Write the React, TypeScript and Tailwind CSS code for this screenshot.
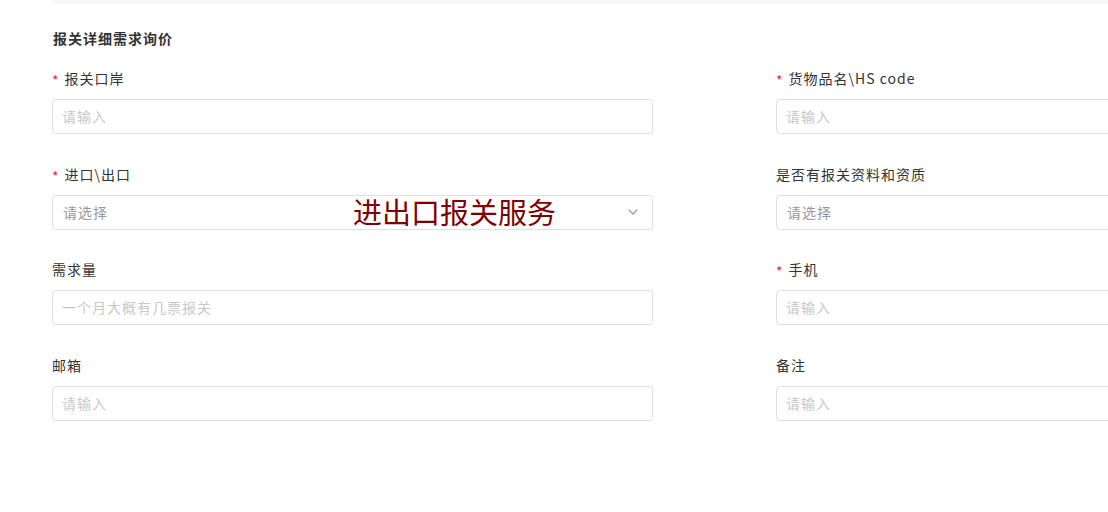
import React from "react";

const font = { fontFamily: '"Noto Sans CJK SC", "Noto Sans", sans-serif' };

function Label({ text, required }: { text: string; required?: boolean }) {
  return (
    <div className="flex items-center h-[20px] text-[14px] leading-[20px] tracking-[1px] text-[#333]">
      {required && <span className="text-[#f5222d] text-[14px] mr-[5px] leading-[20px] relative top-[2px]">*</span>}
      <span>{text}</span>
    </div>
  );
}

function Input({ placeholder }: { placeholder: string }) {
  return (
    <div className="mt-[11px] h-[35px] border border-[#dcdfe6] rounded-[4px] flex items-center px-[9px] text-[14px] tracking-[1px] text-[#c8c8c8] bg-white">
      {placeholder}
    </div>
  );
}

function Select({ placeholder, overlay }: { placeholder: string; overlay?: string }) {
  return (
    <div className="relative mt-[11px] h-[35px] border border-[#dcdfe6] rounded-[4px] flex items-center justify-between pl-[10px] pr-[14px] text-[14px] tracking-[1px] text-[#999] bg-white">
      <span>{placeholder}</span>
      <svg width="10" height="6" viewBox="0 0 10 6" fill="none">
        <path d="M1 1l4 4 4-4" stroke="#999" strokeWidth="1.2" strokeLinecap="round" strokeLinejoin="round" />
      </svg>
      {overlay && (
        <div className="absolute left-[300px] top-[-3px] text-[29px] leading-[36px] tracking-normal text-[#7f0000] whitespace-nowrap">
          {overlay}
        </div>
      )}
    </div>
  );
}

function Field({ children }: { children: React.ReactNode }) {
  return <div className="w-[601px] shrink-0 h-[95.5px]">{children}</div>;
}

export default function App() {
  return (
    <div className="w-[1108px] h-[512px] overflow-hidden bg-white" style={font}>
      <div className="ml-[52px] h-[4px] bg-[#f7f7f7]" />
      <div className="pl-[53px] mt-[24px] h-[20px] text-[14px] leading-[20px] tracking-[1px] font-bold text-[#333]">报关详细需求询价</div>
      <div className="pl-[52px] mt-[20px] grid grid-cols-[601px_601px] gap-x-[123px]">
        <Field>
          <Label text="报关口岸" required />
          <Input placeholder="请输入" />
        </Field>
        <Field>
          <Label text="货物品名\HS code" required />
          <Input placeholder="请输入" />
        </Field>
        <Field>
          <Label text="进口\出口" required />
          <Select placeholder="请选择" overlay="进出口报关服务" />
        </Field>
        <Field>
          <Label text="是否有报关资料和资质" />
          <Select placeholder="请选择" />
        </Field>
        <Field>
          <Label text="需求量" />
          <Input placeholder="一个月大概有几票报关" />
        </Field>
        <Field>
          <Label text="手机" required />
          <Input placeholder="请输入" />
        </Field>
        <Field>
          <Label text="邮箱" />
          <Input placeholder="请输入" />
        </Field>
        <Field>
          <Label text="备注" />
          <Input placeholder="请输入" />
        </Field>
      </div>
    </div>
  );
}
